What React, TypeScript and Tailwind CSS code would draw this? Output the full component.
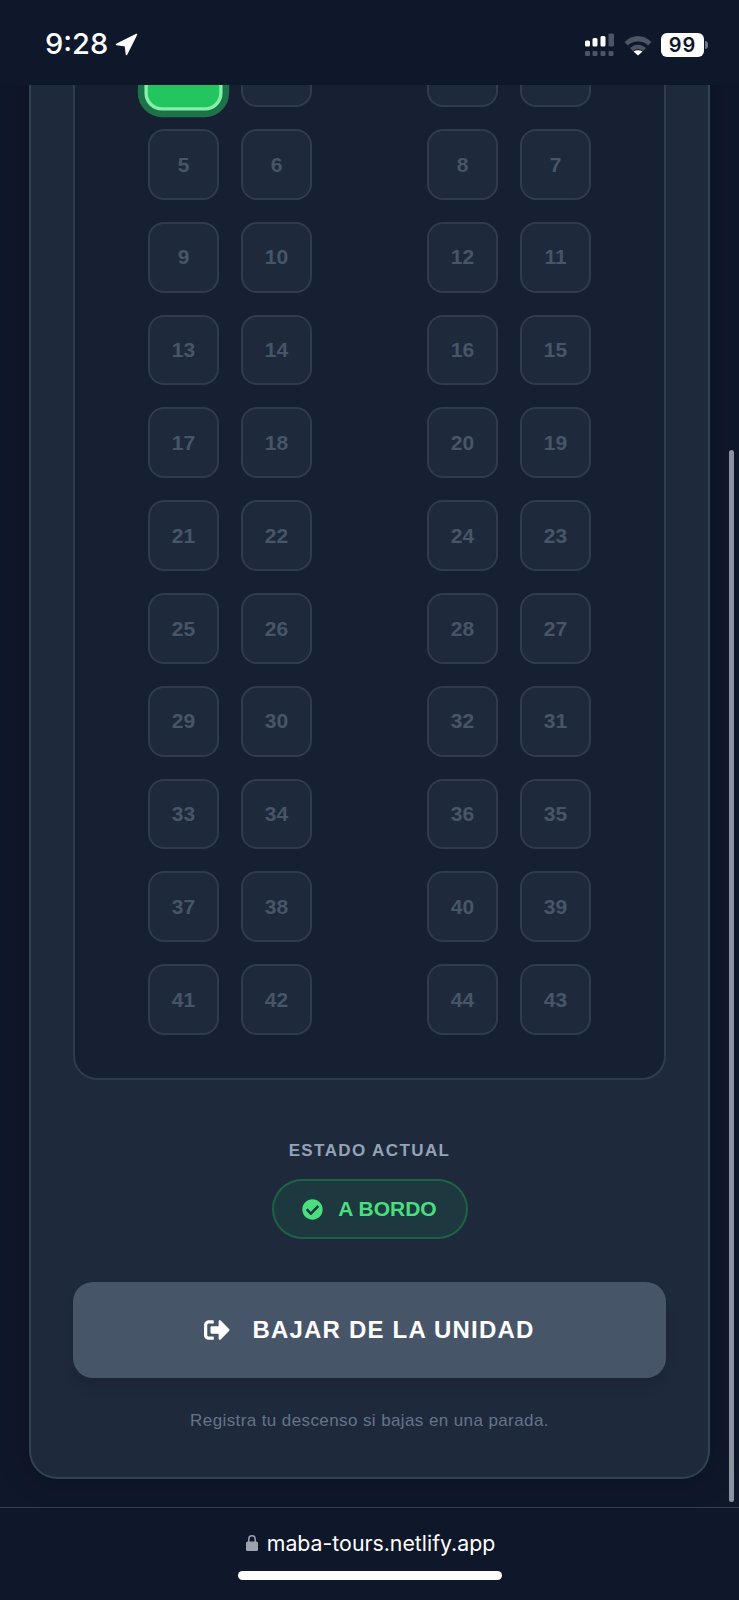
import { FaCheckCircle, FaSignOutAlt } from 'react-icons/fa'

const sans = "font-['Liberation_Sans',Arial,sans-serif]"

const rows = [
  [1, 2, 4, 3],
  [5, 6, 8, 7],
  [9, 10, 12, 11],
  [13, 14, 16, 15],
  [17, 18, 20, 19],
  [21, 22, 24, 23],
  [25, 26, 28, 27],
  [29, 30, 32, 31],
  [33, 34, 36, 35],
  [37, 38, 40, 39],
  [41, 42, 44, 43],
]

function Seat({ n }: { n: number }) {
  if (n === 1) {
    return (
      <div className="w-[71px] h-[70.8px] scale-110 rounded-2xl bg-[#22c55e] border-[3px] border-[#86efac] shadow-[0_0_0_6px_rgba(34,197,94,0.5)]" />
    )
  }
  // first row sits under the status bar, its numbers never show
  return (
    <div className="w-[71px] h-[70.8px] flex items-center justify-center rounded-2xl bg-[#1e293b] border-2 border-[#2f3b4f] text-[21px] font-bold text-[#475569]">
      {n > 4 && n}
    </div>
  )
}

function StatusBar() {
  return (
    <div className="h-[85px] shrink-0 bg-[#0f172a] flex items-start justify-between pt-[26px] pl-[45px] pr-[31px] text-white relative z-10">
      <div className="flex items-center gap-[7px]">
        <span className="font-['Inter',sans-serif] text-[29px] leading-[36px] font-medium">9:28</span>
        <svg width="23" height="23" viewBox="0 0 23 23">
          <path d="M21.5 1.5 L1.5 11.5 L10.5 12.8 L11.5 21.5 Z" fill="#fff" stroke="#fff" strokeWidth="1.6" strokeLinejoin="round" />
        </svg>
      </div>
      <div className="flex items-center gap-[9px] h-[38px]">
        <svg width="31" height="24" viewBox="0 0 31 24">
          <rect x="1" y="7.5" width="5" height="6" rx="1.5" fill="#fff" />
          <rect x="8.5" y="5" width="5" height="8.5" rx="1.5" fill="#fff" />
          <rect x="16.5" y="3" width="5" height="10.5" rx="1.5" fill="#fff" />
          <rect x="24.5" y="0.5" width="5.5" height="13" rx="1" fill="#4b5563" />
          <rect x="1" y="18" width="5" height="5" rx="1" fill="#4b5563" />
          <rect x="8.5" y="18" width="5" height="5" rx="1" fill="#4b5563" />
          <rect x="16.5" y="18" width="5" height="5" rx="1" fill="#4b5563" />
          <rect x="24.5" y="18" width="5" height="5" rx="1" fill="#4b5563" />
        </svg>
        <svg width="28" height="21" viewBox="0 0 28 21">
          <path d="M0.5 7 C8 -1 20 -1 27.5 7 L24.2 10.5 C18.5 5 9.5 5 3.8 10.5 Z" fill="#4b5563" />
          <path d="M6 13 C11 8.5 17 8.5 22 13 L19 16 C16 13.8 12 13.8 9 16 Z" fill="#4b5563" />
          <path d="M9.5 16.5 C12.5 14.8 15.5 14.8 18.5 16.5 L14 20.5 Z" fill="#fff" />
        </svg>
        <div className="flex items-center gap-[1px]">
          <div className="w-[43px] h-[24px] rounded-[6px] bg-white flex items-center justify-center font-['Inter',sans-serif] text-[20px] font-semibold text-[#0f172a] tracking-[1px]">
            99
          </div>
          <div className="w-[3px] h-[8px] rounded-r-full bg-[#6b7280]" />
        </div>
      </div>
    </div>
  )
}

export default function App() {
  return (
    <div className={`relative w-[739px] h-[1600px] overflow-hidden flex flex-col bg-[#0f172a] ${sans}`}>
      <StatusBar />

      <main className="flex-1 overflow-hidden px-[29px] min-h-0">
        <div className="-mt-[48.8px] h-[1442.5px] rounded-b-[28px] border-x-2 border-b-2 border-[#334155] bg-[#1e293b] shadow-[0_0_30px_rgba(0,0,0,0.25)] px-[42px]">
          <div className="h-[1043.8px] rounded-b-[24px] border-x-2 border-b-2 border-[#2f3b4f] bg-[#172033] flex flex-col gap-[22px]">
            {rows.map((r) => (
              <div key={r[0]} className="flex justify-center">
                <div className="flex gap-[22px]">
                  <Seat n={r[0]} />
                  <Seat n={r[1]} />
                </div>
                <div className="w-[115px]" />
                <div className="flex gap-[22px]">
                  <Seat n={r[2]} />
                  <Seat n={r[3]} />
                </div>
              </div>
            ))}
          </div>

          <div className="mt-[59px] flex flex-col items-center">
            <p className="text-[17px] leading-[24px] font-bold tracking-[1.4px] text-[#94a3b8]">ESTADO ACTUAL</p>
            <div className="mt-[16px] w-[196px] h-[60px] rounded-full border-2 border-[#22c55e4d] bg-[#22c55e1a] flex items-center justify-center gap-[15px] text-[#4ade80]">
              <FaCheckCircle className="w-[21px] h-[21px]" />
              <span className="text-[21px] font-bold">A BORDO</span>
            </div>
          </div>

          <button className="mt-[43px] w-full h-[96px] rounded-[20px] bg-[#475569] shadow-[0_8px_12px_rgba(0,0,0,0.1)] flex items-center justify-center gap-[22px] text-white">
            <FaSignOutAlt className="w-[26px] h-[26px]" />
            <span className="text-[24px] font-bold tracking-[1.2px]">BAJAR DE LA UNIDAD</span>
          </button>

          <p className="mt-[31px] text-center text-[17px] leading-[24px] tracking-[0.4px] text-[#64748b]">
            Registra tu descenso si bajas en una parada.
          </p>
        </div>
      </main>

      <div className="h-[93px] shrink-0 bg-[#0f172a] border-t border-[#334155] flex flex-col items-center relative">
        <div className="mt-[21px] ml-[2px] flex items-center gap-[9px]">
          <svg width="12" height="16" viewBox="0 0 12 16" className="-mt-[1px]">
            <path d="M2.8 7 V4 a3.2 3.2 0 0 1 6.4 0 V7" fill="none" stroke="#9ca3af" strokeWidth="1.5" />
            <rect x="0" y="6.5" width="12" height="9.5" rx="1.5" fill="#9ca3af" />
          </svg>
          <span className="font-['Inter',sans-serif] text-[21.3px] leading-[28px] text-white">maba-tours.netlify.app</span>
        </div>
        <div className="mt-[14px] w-[264px] h-[9px] rounded-full bg-white" />
      </div>

      <div className="absolute left-[729px] top-[450px] w-[5px] h-[1052px] rounded-full bg-[#8b93a1]" />
    </div>
  )
}
